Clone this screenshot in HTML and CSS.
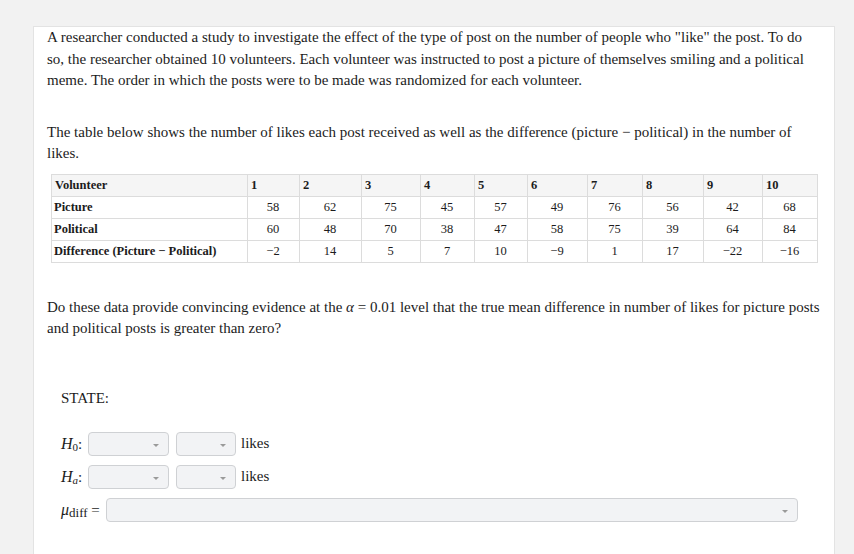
FILE: index.html
```html
<!DOCTYPE html>
<html lang="en">
<head>
<meta charset="utf-8">
<title>Paired data question</title>
<link rel="stylesheet" href="styles.css">
</head>
<body>
<div class="card">
  <p class="para">A researcher conducted a study to investigate the effect of the type of post on the number of people who "like" the post. To do so, the researcher obtained 10 volunteers. Each volunteer was instructed to post a picture of themselves smiling and a political meme. The order in which the posts were to be made was randomized for each volunteer.</p>
  <p class="para gap">The table below shows the number of likes each post received as well as the difference (picture − political) in the number of likes.</p>
  <table class="data">
    <colgroup>
      <col class="c0"><col class="c1"><col class="c2"><col class="c3"><col class="c4"><col class="c5"><col class="c6"><col class="c7"><col class="c8"><col class="c9"><col class="c10">
    </colgroup>
    <tr class="head"><th>Volunteer</th><th>1</th><th>2</th><th>3</th><th>4</th><th>5</th><th>6</th><th>7</th><th>8</th><th>9</th><th>10</th></tr>
    <tr><th>Picture</th><td>58</td><td>62</td><td>75</td><td>45</td><td>57</td><td>49</td><td>76</td><td>56</td><td>42</td><td>68</td></tr>
    <tr><th>Political</th><td>60</td><td>48</td><td>70</td><td>38</td><td>47</td><td>58</td><td>75</td><td>39</td><td>64</td><td>84</td></tr>
    <tr><th>Difference (Picture − Political)</th><td>−2</td><td>14</td><td>5</td><td>7</td><td>10</td><td>−9</td><td>1</td><td>17</td><td>−22</td><td>−16</td></tr>
  </table>
  <p class="para after-table">Do these data provide convincing evidence at the <span class="m">α</span> = 0.01 level that the true mean difference in number of likes for picture posts and political posts is greater than zero?</p>

  <div class="state">
    <div class="state-title">STATE:</div>
    <div class="rows">
      <div class="row">
        <span class="lab"><span class="m">H</span><sub>0</sub>:</span>
        <span class="sel s1"><span class="caret"></span></span>
        <span class="sel s2"><span class="caret"></span></span>
        <span class="unit">likes</span>
      </div>
      <div class="row">
        <span class="lab"><span class="m">H</span><sub class="it">a</sub>:</span>
        <span class="sel s1"><span class="caret"></span></span>
        <span class="sel s2"><span class="caret"></span></span>
        <span class="unit">likes</span>
      </div>
      <div class="row">
        <span class="lab mu"><span class="m">μ</span><sub>diff</sub> =</span>
        <span class="sel wide"><span class="caret"></span></span>
      </div>
    </div>
  </div>
</div>
</body>
</html>
```

FILE: styles.css
```css
html, body {
  margin: 0;
  padding: 0;
  background: #f2f2f2;
  height: 100%;
  overflow: hidden;
}
body {
  font-family: "Liberation Serif", "Times New Roman", serif;
  color: #1c1c1c;
  font-size: 15px;
}
.card {
  margin: 26px 0 0 33px;
  width: 774px;
  background: #fff;
  border: 1px solid #e3e3e3;
  padding: 0 13px 120px 13px;
}
.para {
  margin: 0;
  line-height: 21.5px;
}
.para.gap {
  margin-top: 30px;
}
.para.after-table {
  margin-top: 34px;
}
.m {
  font-style: italic;
}
.data {
  margin: 9px 0 0 4px;
  border-collapse: collapse;
  font-size: 12.5px;
  table-layout: fixed;
  width: 766px;
}
.data col.c0 { width: 196px; }
.data col.c1 { width: 52px; }
.data col.c2 { width: 62px; }
.data col.c3 { width: 59px; }
.data col.c4 { width: 54px; }
.data col.c5 { width: 53px; }
.data col.c6 { width: 60px; }
.data col.c7 { width: 55px; }
.data col.c8 { width: 61px; }
.data col.c9 { width: 59px; }
.data col.c10 { width: 55px; }
.data th, .data td {
  border: 1px solid #dcdcdc;
  height: 21px;
  padding: 0 3px 0 2px;
  line-height: 20px;
}
.data th {
  text-align: left;
  font-weight: bold;
}
.data td {
  text-align: center;
}
.data tr.head th {
  background: #f5f5f5;
  padding-left: 3px;
}
.state {
  padding-left: 14px;
  margin-top: 47px;
}
.state-title {
  line-height: 22px;
}
.rows {
  margin-top: 23px;
  display: flex;
  flex-direction: column;
  gap: 9px;
}
.row {
  display: flex;
  align-items: center;
  height: 24px;
}
.lab {
  font-size: 15px;
  width: 27px;
  white-space: nowrap;
}
.lab .m {
  font-size: 16px;
}
.lab sub {
  font-size: 11px;
  vertical-align: -2px;
  line-height: 0;
}
.lab sub.it {
  font-style: italic;
}
.lab.mu {
  width: 45px;
}
.lab.mu sub {
  font-size: 13px;
}
.sel {
  position: relative;
  display: block;
  box-sizing: border-box;
  height: 24px;
  background: #f2f3f5;
  border: 1px solid #cfd1d4;
  border-radius: 4px;
}
.s1 { width: 81px; }
.s2 { width: 60px; margin-left: 7px; }
.wide { width: 692px; }
.caret {
  position: absolute;
  right: 9px;
  top: 11px;
  width: 0;
  height: 0;
  border-left: 3px solid transparent;
  border-right: 3px solid transparent;
  border-top: 3px solid #9a9a9a;
}
.unit {
  margin-left: 5px;
  font-size: 15px;
}
```
